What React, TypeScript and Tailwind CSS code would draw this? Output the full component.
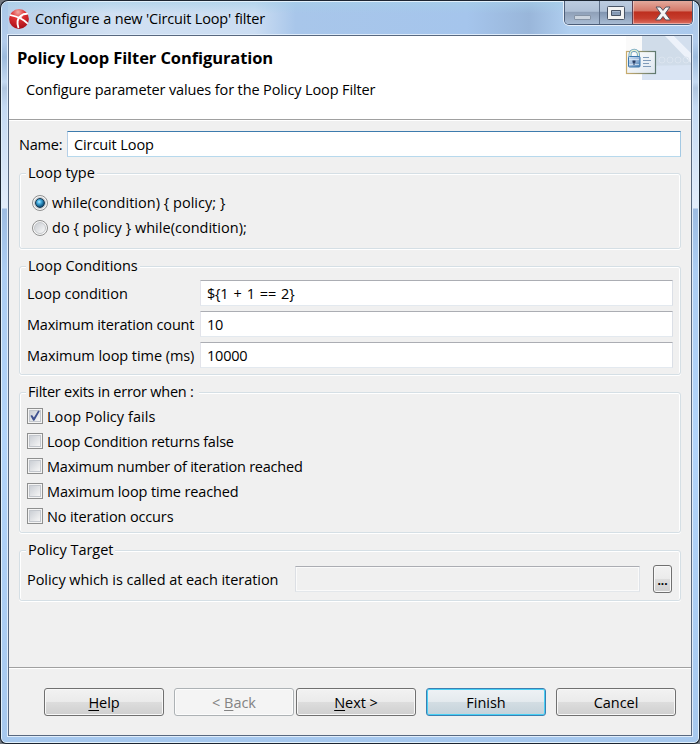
import type { ReactNode } from "react";

function Group({ title, className, children }: { title: string; className: string; children: ReactNode }) {
  return (
    <fieldset
      className={`w-[662px] rounded-[3px] border border-[#d5dfe5] shadow-[inset_0_1px_0_#fff,inset_1px_0_0_#fff,inset_-1px_0_0_#fff,0_1px_0_#fff] ${className}`}
    >
      <legend className="ml-[6px] h-5 bg-[#f0f0f0] px-[2px] leading-5">{title}</legend>
      {children}
    </fieldset>
  );
}

function Field({ label, value, spacing }: { label: string; value: string; spacing: string }) {
  return (
    <label className="flex h-[26px] items-center">
      <span className={`w-[173px] shrink-0 pt-px whitespace-nowrap ${spacing}`}>{label}</span>
      <span className="flex h-[26px] flex-1 items-center border border-t-[#abadb3] border-r-[#dbdfe6] border-b-[#e3e9ef] border-l-[#e2e3ea] bg-white pt-px pl-[6px] tracking-[-0.2px] [word-spacing:1.5px]">
        {value}
      </span>
    </label>
  );
}

function Check({ label, spacing, checked = false }: { label: string; spacing: string; checked?: boolean }) {
  return (
    <div className="flex h-[25px] items-center gap-1">
      <span className="flex size-4 items-center justify-center border border-[#8e8f8f] bg-[#f4f4f4]">
        <span className="flex size-3 items-center justify-center border border-[#c3c7cd] bg-linear-to-br from-[#cbcfd5] to-[#f6f6f6]">
          {checked && (
            <svg viewBox="0 0 12 12" className="size-3 shrink-0 overflow-visible">
              <path d="M1.400 5.800 3 4.900 4.900 7.600 9.200.600l1.500.600-5.200 9.400-1.300.100Z" fill="#405290" />
            </svg>
          )}
        </span>
      </span>
      <span className={`pt-[2px] ${spacing}`}>{label}</span>
    </div>
  );
}

function Radio({ label, checked = false }: { label: string; checked?: boolean }) {
  return (
    <div className="flex h-[25px] items-center gap-1">
      <span className="flex size-4 items-center justify-center rounded-full border border-[#8e8f8f] bg-[#f6f6f6]">
        <span className="flex size-3 items-center justify-center rounded-full border border-[#c5c8cc] bg-linear-to-br from-[#c9cdd2] to-[#fafafa]">
          {checked && (
            <span className="size-[10px] shrink-0 rounded-full border border-[#173850] bg-[radial-gradient(circle_at_40%_35%,#bceaff_0%,#45afe0_28%,#155d89_65%,#0b3555_100%)]" />
          )}
        </span>
      </span>
      <span className="tracking-[0.02px]">{label}</span>
    </div>
  );
}

const normalButton =
  "border-[#707070] bg-[linear-gradient(#f2f2f2_0%,#ebebeb_48%,#dddddd_50%,#cfcfcf_100%)] shadow-[inset_0_0_0_1px_#f8f8f8]";

function Button({ className = normalButton, children }: { className?: string; children: ReactNode }) {
  return (
    <button className={`flex h-7 w-[120px] items-center justify-center rounded-[3px] border pt-px ${className}`}>
      <span>{children}</span>
    </button>
  );
}

function Key({ children }: { children: string }) {
  return <span className="underline decoration-1 underline-offset-2">{children}</span>;
}

function AppIcon() {
  return (
    <svg viewBox="0 0 20 20" className="size-5">
      <defs>
        <radialGradient id="ball" cx="45%" cy="15%" r="85%">
          <stop offset="0" stopColor="#f1aaa3" />
          <stop offset=".4" stopColor="#df3134" />
          <stop offset="1" stopColor="#a80f18" />
        </radialGradient>
      </defs>
      <circle cx="10" cy="10" r="9.900" fill="url(#ball)" />
      <g fill="none" stroke="#fff" strokeLinecap="round">
        <path d="M1.600 6.200C8 7.600 14 10 18.200 14.200" strokeWidth="1.800" />
        <path d="M18 4.800C12.800 4.800 9.400 8 8.600 12c-.3 2.200 0 4.300.7 6.300" strokeWidth="1.900" />
      </g>
      <path d="M8.500 8.200 12.500 6 14.500 5.300 12.400 9.500Z" fill="#fff" fillOpacity=".75" />
    </svg>
  );
}

function Banner() {
  return (
    <svg viewBox="0 0 66 46" className="h-[46px] w-[66px] self-start">
      <defs>
        <linearGradient id="sheet" x1="0" y1="0" x2="1" y2="1">
          <stop offset="0" stopColor="#ffffff" />
          <stop offset="1" stopColor="#dde6ef" />
        </linearGradient>
        <linearGradient id="edge" x1="0" y1="0" x2="1" y2="0">
          <stop offset="0" stopColor="#c9ac6d" />
          <stop offset="1" stopColor="#5d786f" />
        </linearGradient>
        <linearGradient id="lock" x1="0" y1="0" x2="1" y2="1">
          <stop offset="0" stopColor="#d5e6f6" />
          <stop offset=".5" stopColor="#9fbbdc" />
          <stop offset="1" stopColor="#4178ae" />
        </linearGradient>
      </defs>
      <rect x="1" width="16" height="15" fill="#fafafa" />
      <rect x="17" width="49" height="44" fill="#d9e4f3" />
      <path d="M17 0H41L66 26V29L17 30Z" fill="#d0dce9" />
      <path d="M40 0H49L66 17V27Z" fill="#edf2fa" />
      <path d="M49 0H66V17Z" fill="#d3dfee" />
      <g fill="none" stroke="#dbe4ef">
        <circle cx="37" cy="24" r="3" />
        <circle cx="45" cy="24" r="3" />
        <circle cx="53" cy="24" r="3" />
        <circle cx="61" cy="24" r="3" />
      </g>
      <rect x="1.500" y="15.500" width="29" height="22" fill="url(#sheet)" stroke="url(#edge)" strokeWidth="1.200" />
      <path d="M18 21.500h6M18 24.500h8M18 27.500h6M18 30.500h8" stroke="#809bb9" />
      <path d="M5 22v-3.500a4.200 4.200 0 0 1 8.400 0V22" fill="none" stroke="#5f9ac1" strokeWidth="3" />
      <path d="M5 22v-3.500a4.200 4.200 0 0 1 8.400 0V22" fill="none" stroke="#e4efcf" strokeWidth="1.400" />
      <rect x="3.500" y="20.500" width="11.500" height="10.500" rx="1" fill="url(#lock)" stroke="#3c78ac" />
      <path d="M4 23.500h10M4 28.500h10" stroke="#e4eef8" strokeOpacity=".7" />
      <path d="M7.500 24.500h3v2l-1 .5v2h-1v-2l-1-.5Z" fill="#293d62" />
    </svg>
  );
}

function WindowButtons() {
  return (
    <div className="-mt-px flex h-[24px] w-[129px] self-start overflow-hidden rounded-b-[5px] border border-t-0 border-[#4c5d78] shadow-[0_1px_0_#e6effa,1px_0_0_#e6effa,-1px_0_0_#e6effa]">
      <div className="flex w-[35px] justify-center border-r border-[#5e6f88] bg-[linear-gradient(#bccce0_0%,#afc0d6_45%,#8e9fb7_48%,#a9bcd4_100%)] pt-[14px]">
        <span className="h-[5px] w-[17px] rounded-[1px] border border-[#8593a5] bg-[#cbd4df]" />
      </div>
      <div className="flex w-[33px] justify-center border-r border-[#5e3f50] bg-[linear-gradient(#bccce0_0%,#afc0d6_45%,#8094b0_48%,#a9bcd4_100%)] pt-[5px]">
        <svg viewBox="0 0 18 15" className="h-[15px] w-[18px] shrink-0">
          <path
            fillRule="evenodd"
            d="M.5 1.500q0-1 1-1h15q1 0 1 1v11q0 1-1 1h-15q-1 0-1-1ZM4.500 4.500v5h9v-5Z"
            fill="#f3f3f3"
            stroke="#485365"
          />
        </svg>
      </div>
      <div className="flex flex-1 justify-center bg-[linear-gradient(#e3a99c_0%,#d57767_44%,#bd2e1e_47%,#c63c2c_75%,#dd7265_100%)] pt-[5px] shadow-[inset_1px_-1px_0_#ffffff66]">
        <svg viewBox="0 0 16 15" className="h-[15px] w-4">
          <path
            d="M1 1h4.200L8 4.400 10.800 1H15l-4.600 6.300L15.400 14h-4.700L8 10.500 5.300 14H.6l5-6.700Z"
            fill="#f5f5f5"
            stroke="#555563"
            strokeLinejoin="round"
          />
        </svg>
      </div>
    </div>
  );
}

export default function App() {
  return (
    <div className="h-[744px] w-[700px] overflow-hidden bg-[#727880] font-['Open_Sans',sans-serif] text-[14.5px] leading-5 tracking-[-0.04px] text-black">
      <div className="h-[744px] rounded-t-[8px] rounded-b-[6px] bg-[#1c2531] p-px">
        <div className="flex h-[742px] flex-col rounded-t-[7px] rounded-b-[5px] border border-[#e1f0fb] bg-[linear-gradient(#a9c8e8_0px,#b3cceb_40px,#9dbbdd_55px,#c4d9f1_80px,#b0c6e0_86px,#c5daf3_105px,#e3edfa_206px,#9dbce2_207px,#accdf2_270px,#b2d4fa_440px,#a6c8ee_740px)] px-[6px] pb-[6px]">
          <div className="-mr-[1px] flex h-[33px] items-start justify-between bg-[linear-gradient(#a5d0e899_0%,transparent_35%),linear-gradient(90deg,#bad0e9_0%,#d1e0f2_15%,#cbddf2_36%,#a8c6ea_42%,#a5c5ec_67%,#99b6da_76%,#b0cff0_82%,#abc9ec_100%)]">
            <div className="flex items-center gap-[6px] pt-[6px] pl-px">
              <AppIcon />
              <span className="pt-px tracking-[-0.17px]">Configure a new 'Circuit Loop' filter</span>
            </div>
            <WindowButtons />
          </div>
          <div className="flex min-h-0 flex-1 flex-col border border-[#58687f] bg-[#f0f0f0] shadow-[0_0_0_1px_#e0edfb]">
            <header className="flex h-[84px] shrink-0 justify-between border-b border-[#a0a0a0] bg-white">
              <div className="flex flex-col pl-2">
                <h1 className="mt-[12px] text-[16.5px] font-bold tracking-[-0.09px]">Policy Loop Filter Configuration</h1>
                <p className="mt-[12px] pl-[9px] tracking-[-0.12px]">Configure parameter values for the Policy Loop Filter</p>
              </div>
              <Banner />
            </header>
            <main className="flex flex-1 flex-col border-t border-white pt-[10px] pl-[10px]">
              <div className="flex h-[26px] items-center">
                <span className="w-12 pt-px tracking-[-0.2px]">Name:</span>
                <span className="flex h-[26px] w-[614px] items-center border border-t-[#3d7bad] border-r-[#a4c9e3] border-b-[#b7d9ed] border-l-[#b5cfe7] bg-white pt-px pl-[6px] tracking-[-0.1px]">
                  Circuit Loop
                </span>
              </div>
              <Group title="Loop type" className="mt-[6px] h-[86px]">
                <div className="pt-[7px] pl-3">
                  <Radio label="while(condition) { policy; }" checked />
                  <Radio label="do { policy } while(condition);" />
                </div>
              </Group>
              <Group title="Loop Conditions" className="mt-[7px] h-[119px]">
                <div className="flex flex-col gap-[5px] px-[7px] pt-1">
                  <Field label="Loop condition" value="${1 + 1 == 2}" spacing="tracking-[-0.03px]" />
                  <Field label="Maximum iteration count" value="10" spacing="tracking-[-0.19px]" />
                  <Field label="Maximum loop time (ms)" value="10000" spacing="tracking-[-0.06px]" />
                </div>
              </Group>
              <Group title="Filter exits in error when :" className="mt-[7px] h-[151px] [&>legend]:pr-[5px] [&>legend]:tracking-[-0.25px]">
                <div className="pt-px pl-[7px]">
                  <Check label="Loop Policy fails" spacing="tracking-[0.05px]" checked />
                  <Check label="Loop Condition returns false" spacing="tracking-[-0.2px]" />
                  <Check label="Maximum number of iteration reached" spacing="tracking-[-0.22px]" />
                  <Check label="Maximum loop time reached" spacing="tracking-[-0.13px]" />
                  <Check label="No iteration occurs" spacing="tracking-[-0.13px]" />
                </div>
              </Group>
              <Group title="Policy Target" className="mt-[7px] h-[61px]">
                <div className="flex items-center px-[7px] pt-[5px]">
                  <span className="w-[268px] pt-px tracking-[-0.06px]">Policy which is called at each iteration</span>
                  <span className="h-[26px] w-[345px] border border-t-[#abadb3] border-r-[#dfe3e8] border-b-[#e3e7eb] border-l-[#dcdfe4] shadow-[inset_0_0_0_1px_#fafafa]" />
                  <button
                    className={`ml-[13px] flex h-7 w-[19px] items-center justify-center rounded-[3px] border pt-[3px] text-[12px] font-bold ${normalButton}`}
                  >
                    ...
                  </button>
                </div>
              </Group>
            </main>
            <footer className="flex h-[68px] shrink-0 border-t border-[#a0a0a0] pt-5 pl-[35px] shadow-[inset_0_1px_0_#fff]">
              <Button>
                <Key>H</Key>elp
              </Button>
              <div className="ml-[10px] flex gap-[2px]">
                <Button className="border-[#adb2b5] bg-[#f4f4f4] text-[#838383] shadow-[inset_0_0_0_1px_#fcfcfc]">
                  &lt; <Key>B</Key>ack
                </Button>
                <Button>
                  <Key>N</Key>ext &gt;
                </Button>
              </div>
              <div className="ml-[10px] flex gap-[10px]">
                <Button className="border-[#3c7fb1] bg-[linear-gradient(#eef2f5_0%,#e4eaee_48%,#d3dde3_50%,#c4d2da_100%)] shadow-[inset_0_0_0_1px_#48d0f5]">
                  Finish
                </Button>
                <Button>Cancel</Button>
              </div>
            </footer>
          </div>
        </div>
      </div>
    </div>
  );
}
